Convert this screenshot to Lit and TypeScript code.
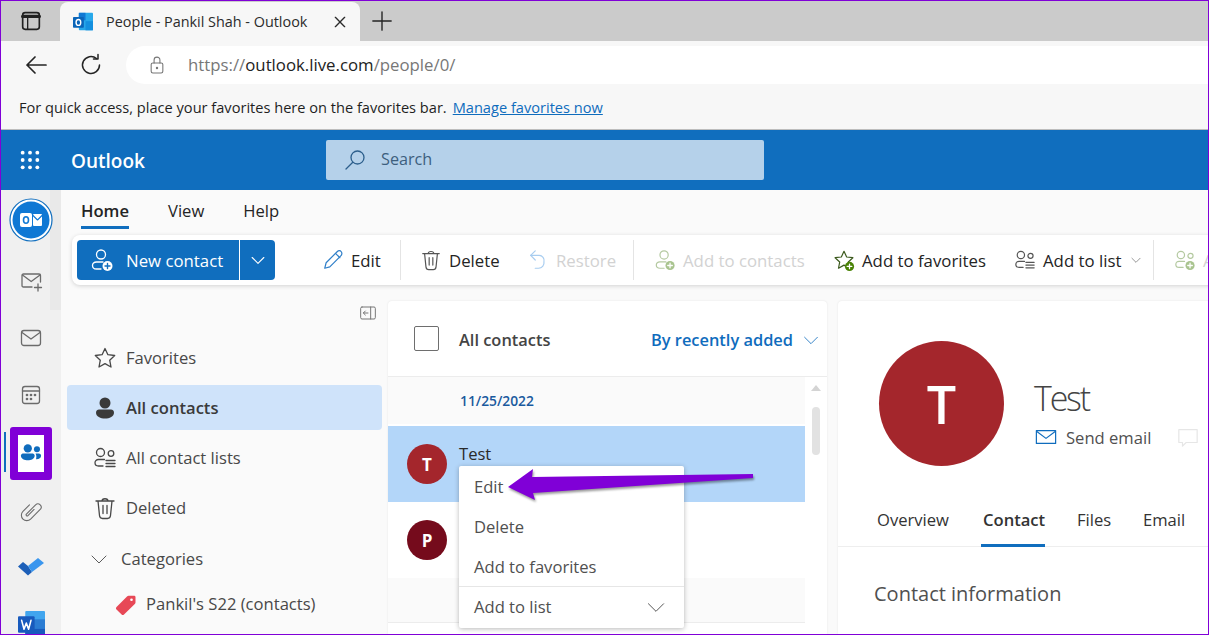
import { LitElement, html, css, svg } from 'lit';
import { customElement } from 'lit/decorators.js';

const icon = (size: number, body: unknown, box = 24) => html`
  <svg class="ic" width=${size} height=${size} viewBox="0 0 ${box} ${box}" fill="none" stroke="currentColor" stroke-width="1.3" stroke-linecap="round" stroke-linejoin="round">${body}</svg>`;

const plusBadge = (cx: number, cy: number, r: number, fill: string) => svg`
  <circle cx=${cx} cy=${cy} r=${r} fill=${fill} stroke="none"/>
  <path d="M${cx - r * 0.5} ${cy}H${cx + r * 0.5}M${cx} ${cy - r * 0.5}V${cy + r * 0.5}" stroke="#fff" stroke-width="1.4"/>`;

const chevron = svg`<path d="M5 9l7 7 7-7"/>`;
const thinChevron = svg`<path d="M5 9l7 7 7-7" stroke-width=".9"/>`;
const personAdd = (badge: string) => svg`
  <circle cx="11" cy="6.5" r="4.5"/>
  <path d="M13 14H6.5C4 14 2.5 15.5 2.5 17.5S4 21 6.5 21H11"/>
  ${plusBadge(17.5, 18, 5, badge)}`;
const peopleList = svg`
  <circle cx="7.5" cy="6.5" r="4"/><circle cx="18" cy="7.5" r="2.8"/>
  <path d="M11.5 13.5H5.5C3.5 13.5 2 15 2 16.8S3.5 20 5.5 20H10"/>
  <path d="M13 14.5H22M13 17.5H22M13 20.5H22"/>`;
const trash = svg`
  <path d="M3 5H21M9 5C9 2 15 2 15 5M5 5L6.5 19.5C6.7 21.5 8 22.500 9.500 22.500H14.500C16 22.500 17.300 21.500 17.500 19.500L19 5"/>
  <path d="M10 9.500V17.500M14 9.500V17.500"/>`;
const star = svg`<path d="M12 2.500l2.900 6.200 6.800.8-5 4.700 1.300 6.800-6-3.400-6 3.400 1.300-6.800-5-4.700 6.800-.8z"/>`;

const outlookTile = svg`
  <rect x="7" y="1" width="17" height="21" rx="1" fill="#28a8ea" stroke="none"/>
  <rect x="7" y="1" width="8" height="9" fill="#0f78d4" stroke="none"/>
  <rect x="15" y="11" width="9" height="11" fill="#1490df" stroke="none"/>
  <rect x="0" y="6" width="13" height="13" rx="1" fill="#0a64b8" stroke="none"/>
  <ellipse cx="6.500" cy="12.500" rx="2.800" ry="3.500" fill="none" stroke="#fff" stroke-width="1.700"/>`;

type RibbonItem = { label: string; ic: unknown; off?: boolean; caret?: boolean; tone?: string };

const ribbonItems: RibbonItem[] = [
  { label: 'Edit', tone: 'blue', ic: svg`<path d="M3 21l1.500-6L16.500 3C18 1.500 20 1.500 21 3s1 3-.5 4.500L8.500 19.500z"/><path d="M15 5l4.500 4.500"/>` },
  { label: 'sep', ic: null },
  { label: 'Delete', tone: 'grey', ic: trash },
  { label: 'Restore', off: true, tone: 'pale', ic: svg`<path d="M9 2L4 7l5 5"/><path d="M4 7h9a5.500 5.500 0 0 1 5.500 7 6 6 0 0 1-6 7H9"/>` },
  { label: 'sep', ic: null },
  { label: 'Add to contacts', off: true, tone: 'sage', ic: personAdd('#a9c48f') },
  { label: 'Add to favorites', tone: 'ink', ic: svg`${star}${plusBadge(18, 19, 5, '#498205')}` },
  { label: 'Add to list', caret: true, tone: 'grey', ic: peopleList },
  { label: 'sep', ic: null },
  { label: 'Add to contacts', off: true, tone: 'sage', ic: svg`
    <circle cx="7.500" cy="6.500" r="4"/><circle cx="18" cy="7.500" r="2.800"/>
    <path d="M11.500 13.500H5.500C3.500 13.500 2 15 2 16.800S3.500 20 5.500 20H10"/>${plusBadge(17.5, 18, 5, '#a9c48f')}` },
];

const navItems = [
  { label: 'Favorites', ic: star, cls: '' },
  {
    label: 'All contacts', cls: 'active',
    ic: svg`<circle cx="12" cy="7" r="5.500" fill="currentColor" stroke="none"/><path d="M3 16.500c0-2 1.500-3 3-3h12c1.500 0 3 1 3 3 0 4-4.500 6-9 6s-9-2-9-6z" fill="currentColor" stroke="none"/>`,
  },
  { label: 'All contact lists', ic: peopleList, cls: '' },
  { label: 'Deleted', ic: trash, cls: '' },
];

@customElement('app-root')
export class AppRoot extends LitElement {
  static styles = css`
    :host {
      display: block;
      width: 1209px;
      height: 635px;
      font-family: 'Open Sans', 'Noto Sans', sans-serif;
      font-size: 16.6px;
      color: #242424;
    }
    * { box-sizing: border-box; }
    .ic { display: block; flex: none; }

    .window {
      position: relative;
      width: 1209px;
      height: 635px;
      border: 1px solid #8000d7;
      display: flex;
      flex-direction: column;
      overflow: hidden;
      background: #fafafa;
    }

    /* browser chrome */
    .tabstrip {
      flex: none;
      height: 40px;
      background: #cbcbcb;
      display: flex;
      align-items: flex-end;
    }
    .tab-toggle { width: 59px; height: 40px; display: flex; align-items: center; justify-content: center; }
    .tab {
      width: 300px;
      height: 39px;
      background: #f7f7f7;
      border-radius: 8px 8px 0 0;
      display: flex;
      align-items: center;
      padding: 0 12px 0 13px;
      font-size: 14.4px;
      color: #2b2b2b;
      white-space: nowrap;
    }
    .tab .title { margin-left: 13px; flex: 1; }
    .new-tab { width: 44px; height: 40px; display: flex; align-items: center; justify-content: center; }

    .toolbar {
      flex: none;
      height: 47px;
      background: #f7f7f7;
      display: flex;
      align-items: center;
      padding-left: 23px;
    }
    .toolbar .refresh { margin-left: 31px; }
    .address {
      margin-left: 23px;
      flex: 1;
      height: 38px;
      margin-right: -30px;
      background: #fff;
      border-radius: 19px 0 0 19px;
      display: flex;
      align-items: center;
      padding-left: 21px;
      font-size: 16.8px;
      color: #777;
    }
    .address .url { margin-left: 21px; }
    .address b { font-weight: 400; color: #222; }

    .favbar {
      flex: none;
      height: 42px;
      background: #f7f7f7;
      border-bottom: 1px solid #bdbdbd;
      display: flex;
      align-items: center;
      padding: 0 0 3px 18px;
      font-size: 14.6px;
      color: #1f1f1f;
      white-space: nowrap;
    }
    .favbar a { margin-left: 6px; color: #0f6cbd; text-decoration: underline; }

    /* outlook header */
    .suite {
      flex: none;
      height: 60px;
      background: #106ebe;
      display: flex;
      align-items: center;
      color: #fff;
      padding-left: 18px;
    }
    .suite .brand { margin-left: 30px; width: 255px; font-size: 19px; font-weight: 600; padding-top: 2px; }
    .search {
      width: 438px;
      height: 40px;
      background: #b5d1ea;
      border-radius: 2px;
      display: flex;
      align-items: center;
      padding-left: 17px;
      color: #2d5f8c;
      font-size: 16.2px;
    }
    .search span { margin-left: 14px; color: #3d5f7e; padding-bottom: 2px; }

    .body { flex: 1; min-height: 0; display: flex; }

    /* app rail */
    .rail {
      flex: none;
      width: 60px;
      background: linear-gradient(#e9e9e9, #e9e9e9) right top / 11px 120px no-repeat, #f0f0f0;
      display: flex;
      flex-direction: column;
      align-items: center;
      padding-top: 8px;
      color: #6b6b6b;
      position: relative;
    }
    .logo { height: 44px; margin-bottom: 10px; }
    .slot { flex: none; height: 57.2px; width: 100%; display: flex; align-items: center; justify-content: center; }
    .slot.current { position: relative; }
    .slot.clip { padding-top: 3px; }
    .slot.word { padding-top: 2px; }
    .mark {
      width: 42px;
      height: 53px;
      margin-top: 2px;
      border: 8px solid #8000d7;
      border-radius: 3px;
      background: #fff;
      display: flex;
      align-items: center;
      justify-content: center;
      color: #0f6cbd;
    }
    .indicator { position: absolute; left: 3px; top: 8px; width: 2px; height: 40px; background: #106ebe; }

    .main { flex: 1; min-width: 0; display: flex; flex-direction: column; }

    /* ribbon */
    .ribbon-tabs {
      flex: none;
      height: 45px;
      display: flex;
      padding-left: 20px;
      gap: 39px;
      color: #242424;
    }
    .ribbon-tabs div { padding-top: 9px; height: 39px; }
    .ribbon-tabs .on { font-weight: 600; border-bottom: 3px solid #106ebe; }
    .ribbon {
      flex: none;
      height: 50px;
      margin-left: 11px;
      margin-right: -8px;
      padding-left: 5px;
      background: #fff;
      border-radius: 8px 0 0 8px;
      box-shadow: 0 1px 4px rgba(0, 0, 0, .16);
      display: grid;
      grid-template-columns: 245px 78px 20px 107px 106px 21px 179px 181px 139px 21px 60px;
      align-items: center;
      white-space: nowrap;
      font-size: 16.8px;
    }
    .split { display: flex; width: 198px; height: 40px; color: #fff; }
    .split .new {
      width: 162px;
      background: #106ebe;
      border-radius: 4px 0 0 4px;
      display: flex;
      align-items: center;
      padding-left: 13px;
      gap: 12px;
    }
    .split .more {
      width: 35px;
      margin-left: 1px;
      background: #106ebe;
      border-radius: 0 4px 4px 0;
      display: flex;
      align-items: center;
      justify-content: center;
    }
    .rb { display: flex; align-items: center; gap: 7px; color: #242424; overflow: hidden; }
    .rb.off { color: #d2d2d2; }
    .rb .i { color: #333; }
    .rb .i.blue { color: #2f7fc9; }
    .rb .i.grey { color: #555; }
    .rb .i.pale { color: #a8cdf0; }
    .rb .i.sage { color: #b4c9a0; }
    .rb .i.ink { color: #3c5a1e; }
    .rb .caret { margin-left: 1px; color: #777; }
    .rsep { width: 1px; height: 40px; background: #e4e4e4; }

    .content { flex: 1; min-height: 0; display: flex; padding-top: 16px; }

    /* nav */
    .nav { flex: none; width: 327px; padding: 0 6px; color: #484848; position: relative; }
    .collapse { display: flex; justify-content: flex-end; height: 34px; padding: 4px 6px 0 0; color: #777; }
    .nav-row {
      height: 45px;
      margin-bottom: 5px;
      border-radius: 4px;
      display: flex;
      align-items: center;
      padding-left: 26px;
      gap: 9px;
    }
    .nav-row.active { background: #cfe3fa; font-weight: 600; color: #3a3a3a; }
    .nav-row.cat { padding-left: 20px; gap: 10px; margin-bottom: 0; margin-top: 6px; }
    .nav-row.tag { padding-left: 47px; gap: 8px; margin-bottom: 0; }

    /* list */
    .list {
      flex: none;
      width: 439px;
      background: #fff;
      border-radius: 4px 4px 0 0;
      box-shadow: 0 0 2px rgba(0, 0, 0, .1);
      position: relative;
    }
    .list-head {
      height: 76px;
      border-bottom: 1px solid #ececec;
      display: flex;
      align-items: center;
      padding-left: 26px;
    }
    .check { width: 25px; height: 25px; border: 1px solid #6e6e6e; border-radius: 2px; }
    .list-head .all { margin-left: 20px; font-weight: 600; color: #444; font-size: 16.4px; padding-top: 2px; }
    .sort { margin-left: auto; display: flex; align-items: center; color: #0f6cbd; font-weight: 600; gap: 7px; padding: 2px 5px 0 0; font-size: 16.4px; }
    .list-body { display: flex; }
    .rows { width: 417px; }
    .date {
      height: 49px;
      padding: 14px 0 0 72px;
      background: #fafafa;
      border-bottom: 2px solid #fff;
      color: #1a5a9e;
      font-weight: 600;
      font-size: 13.8px;
    }
    .row { height: 76px; display: flex; padding: 18px 0 0 19px; gap: 12px; background: #fff; }
    .row.sel { background: #b3d6f9; }
    .av {
      width: 40px;
      height: 40px;
      border-radius: 50%;
      color: #fff;
      font-weight: 700;
      font-size: 17px;
      display: flex;
      align-items: center;
      justify-content: center;
    }
    .av.t { background: #a4262c; }
    .av.p { background: #750b1c; }
    .row .name { margin-top: -2px; color: #2a2a2a; }
    .group { height: 45px; background: #fafafa; border-bottom: 1px solid #ececec; }
    .scroll { width: 22px; display: flex; flex-direction: column; align-items: center; padding-top: 8px; }
    .scroll .up { width: 0; height: 0; border: 5px solid transparent; border-top: 0; border-bottom: 6px solid #d4d4d4; }
    .scroll .thumb { margin-top: 16px; width: 8px; height: 48px; border-radius: 4px; background: #e2e2e2; }

    .menu {
      position: absolute;
      left: 71px;
      top: 165px;
      width: 225px;
      height: 162px;
      background: #fff;
      border-radius: 2px;
      box-shadow: 0 1px 5px rgba(0, 0, 0, .28);
      color: #505050;
    }
    .menu div { height: 40px; display: flex; align-items: center; padding: 0 15px 0 15px; justify-content: space-between; }
    .menu .last { border-top: 1px solid #e6e6e6; height: 41px; padding-bottom: 1px; }

    /* detail */
    .detail {
      flex: none;
      width: 380px;
      margin-left: 11px;
      background: #fff;
      border-radius: 4px 0 0 0;
      box-shadow: 0 0 2px rgba(0, 0, 0, .1);
    }
    .hero { display: flex; padding: 40px 0 0 41px; height: 197px; }
    .big {
      flex: none;
      width: 125px;
      height: 125px;
      border-radius: 50%;
      background: #a4262c;
      color: #fff;
      font-size: 52px;
      font-weight: 600;
      display: flex;
      align-items: center;
      justify-content: center;
    }
    .who { margin-left: 30px; padding-top: 32px; }
    .who .name { font-size: 34px; font-weight: 300; letter-spacing: -2.2px; line-height: 50px; color: #444; }
    .acts { display: flex; align-items: center; color: #505050; height: 28px; white-space: nowrap; }
    .acts .mail { margin-left: 1px; color: #0f6cbd; }
    .acts span { margin-left: 9px; }
    .acts .chat { margin-left: 26px; color: #e6e6e6; }
    .dtabs {
      height: 49px;
      border-bottom: 1px solid #eee;
      display: grid;
      grid-template-columns: 104px 96px 66px auto;
      padding-left: 39px;
      color: #333;
    }
    .dtabs div { padding-top: 10px; }
    .dtabs .on { font-weight: 600; border-bottom: 3px solid #106ebe; padding-left: 2px; width: 64px; height: 49px; }
    .info { padding: 33px 0 0 36px; font-size: 20px; color: #505050; }

    .arrow { position: absolute; left: 499px; top: 459px; filter: drop-shadow(1px 2px 1px rgba(0, 0, 0, .4)); }
  `;

  private ribbonCell(it: RibbonItem) {
    if (it.label === 'sep') return html`<div class="rsep"></div>`;
    return html`
      <div class="rb ${it.off ? 'off' : ''}">
        <span class="i ${it.tone ?? ''}">${icon(22, it.ic)}</span>
        <span>${it.label}</span>
        ${it.caret ? html`<span class="caret">${icon(14, chevron)}</span>` : ''}
      </div>`;
  }

  render() {
    return html`
      <div class="window">
        <div class="tabstrip">
          <div class="tab-toggle">
            ${icon(20, svg`<rect x="2" y="2" width="20" height="20" rx="3" stroke-width="2" stroke="#222"/><path d="M2 6.500H22" stroke="#222" stroke-width="4"/><path d="M8 8V22" stroke="#222" stroke-width="1.600"/>`)}
          </div>
          <div class="tab">
            ${icon(20, outlookTile)}
            <span class="title">People - Pankil Shah - Outlook</span>
            ${icon(16, svg`<path d="M5 5L19 19M19 5L5 19" stroke-width="2"/>`)}
          </div>
          <div class="new-tab">${icon(22, svg`<path d="M12 2V22M2 12H22" stroke-width="1.500"/>`)}</div>
        </div>

        <div class="toolbar">
          ${icon(24, svg`<path d="M22 12H3M11 4L3 12L11 20" stroke-width="1.700"/>`)}
          <span class="refresh">${icon(24, svg`<path d="M20.500 12A8.500 8.500 0 1 1 17.500 5.500" stroke-width="1.500"/><path d="M19 1.500V6H14.500" stroke-width="1.500"/>`)}</span>
          <div class="address">
            ${icon(20, svg`<rect x="5" y="9.500" width="14" height="12" rx="2"/><path d="M8.500 9.500V6A3.500 3.500 0 0 1 15.500 6V9.500"/><circle cx="12" cy="15.500" r=".8" fill="currentColor"/>`)}
            <span class="url">https://<b>outlook.live.com</b>/people/0/</span>
          </div>
        </div>

        <div class="favbar">
          For quick access, place your favorites here on the favorites bar.
          <a>Manage favorites now</a>
        </div>

        <div class="suite">
          ${icon(22, svg`${[4, 12, 20].map((y) => [4, 12, 20].map((x) => svg`<circle cx=${x} cy=${y} r="2.100" fill="#fff" stroke="none"/>`))}`)}
          <div class="brand">Outlook</div>
          <div class="search">
            ${icon(24, svg`<circle cx="14.500" cy="9.500" r="6.500"/><path d="M9.800 14.200L3 21"/>`)}
            <span>Search</span>
          </div>
        </div>

        <div class="body">
          <div class="rail">
            <div class="logo">
              ${icon(44, svg`
                <circle cx="22" cy="22" r="21" stroke="#106ebe" stroke-width="1.200" fill="#fff"/>
                <circle cx="22" cy="22" r="18.500" fill="#0f78d4" stroke="none"/>
                <rect x="11" y="15" width="12" height="14" rx="2" fill="#fff" stroke="none"/>
                <ellipse cx="17" cy="22" rx="2.500" ry="3.300" stroke="#0f78d4" stroke-width="1.600"/>
                <rect x="24" y="16" width="9" height="12" rx="1" fill="#fff" stroke="none"/>
                <path d="M24 17.500L28.500 22L33 17.500" stroke="#0f78d4" stroke-width="1.100"/>`, 44)}
            </div>
            <div class="slot">${icon(24, svg`<path d="M13 18H4.500C3.500 18 3 17.500 3 16.500V6.500C3 5.500 3.500 5 4.500 5H20C21 5 21.500 5.500 21.500 6.500V13"/><path d="M3.500 6L12.200 12.500L21 6"/><path d="M19 15V22M15.500 18.500H22.500"/>`)}</div>
            <div class="slot">${icon(24, svg`<rect x="2.500" y="4.500" width="19" height="15" rx="2.500"/><path d="M3 6.500L12 13L21 6.500"/>`)}</div>
            <div class="slot">${icon(24, svg`<rect x="3.500" y="3.500" width="17" height="17" rx="2.500"/><path d="M3.500 8H20.500"/><circle cx="8" cy="12" r=".7" fill="currentColor"/><circle cx="12" cy="12" r=".7" fill="currentColor"/><circle cx="16" cy="12" r=".7" fill="currentColor"/><circle cx="8" cy="16" r=".7" fill="currentColor"/><circle cx="12" cy="16" r=".7" fill="currentColor"/>`)}</div>
            <div class="slot current">
              <div class="indicator"></div>
              <div class="mark">
                ${icon(22, svg`<circle cx="8.500" cy="7" r="4.500" fill="currentColor" stroke="none"/><circle cx="18.500" cy="8" r="3.300" fill="currentColor" stroke="none"/><path d="M1 15C1 13 2.500 12.500 4 12.500H13C14.500 12.500 16 13 16 15C16 18.500 12 20 8.500 20S1 18.500 1 15Z" fill="currentColor" stroke="none"/><path d="M17 12.500H20.500C22 12.500 23 13.500 23 15C23 17.500 20.500 19 17.500 18.800C18 16.500 18 14.500 17 12.500Z" fill="currentColor" stroke="none"/>`)}
              </div>
            </div>
            <div class="slot clip">${icon(26, svg`<path transform="rotate(45 12 12)" d="M7 9V17.500a5 5 0 0 0 10 0V5a3 3 0 0 0-6 0V17a1 1 0 0 0 2 0V9" stroke-width="1"/>`)}</div>
            <div class="slot">${icon(28, svg`<path d="M1 13.500L6 9L11 13L15 19L11 22.500Z" fill="#1d5fb8" stroke="none"/><path d="M11 13L21 5L27 10L15 19Z" fill="#3a96ee" stroke="none"/>`, 28)}</div>
            <div class="slot word">${icon(27, svg`<rect x="7" y="0" width="19" height="26" rx="1" fill="#41a5ee" stroke="none"/><rect x="7" y="8" width="19" height="9" fill="#2b7cd3" stroke="none"/><rect x="7" y="17" width="19" height="9" fill="#185abd" stroke="none"/><rect x="0" y="5" width="16" height="16" rx="1" fill="#185abd" stroke="none"/><path d="M3.500 9L5.800 17.500L8 11.500L10.200 17.500L12.500 9" stroke="#fff" stroke-width="1.500"/>`, 26)}</div>
          </div>

          <div class="main">
            <div class="ribbon-tabs">
              <div class="on">Home</div>
              <div>View</div>
              <div>Help</div>
            </div>

            <div class="ribbon">
              <div class="split">
                <div class="new">
                  ${icon(24, svg`<circle cx="11" cy="6.500" r="4.500"/><path d="M13 14H6.500C4 14 2.500 15.500 2.500 17.500S4 21 6.500 21H11"/><circle cx="17.500" cy="18" r="5" fill="#fff" stroke="none"/><path d="M15 18H20M17.500 15.500V20.500" stroke="#106ebe" stroke-width="1.400"/>`)}
                  <span>New contact</span>
                </div>
                <div class="more">${icon(20, chevron)}</div>
              </div>
              ${ribbonItems.map((it) => this.ribbonCell(it))}
            </div>

            <div class="content">
              <div class="nav">
                <div class="collapse">
                  ${icon(16, svg`<rect x="1" y="3" width="22" height="18" rx="2" stroke-width="1.500"/><path d="M16 3V21M12 12H5M8 9L5 12L8 15" stroke-width="1.500"/>`)}
                </div>
                ${navItems.map((n) => html`
                  <div class="nav-row ${n.cls}">${icon(24, n.ic)}<span>${n.label}</span></div>`)}
                <div class="nav-row cat">${icon(24, thinChevron)}<span>Categories</span></div>
                <div class="nav-row tag">
                  ${icon(24, svg`<path d="M2.500 15L13 4.500C13.500 4 14 3.800 14.500 3.800H20C21 3.800 21.500 4.300 21.500 5.300V10.500C21.500 11 21.300 11.500 20.800 12L10 22.500C9.300 23.200 8.300 23.200 7.600 22.500L2.500 17.500C1.800 16.800 1.800 15.800 2.500 15Z" fill="#e74856" stroke="none"/><circle cx="17.500" cy="7.700" r="1.300" fill="#fff" stroke="none"/>`)}
                  <span>Pankil's S22 (contacts)</span>
                </div>
              </div>

              <div class="list">
                <div class="list-head">
                  <div class="check"></div>
                  <div class="all">All contacts</div>
                  <div class="sort">By recently added ${icon(22, thinChevron)}</div>
                </div>
                <div class="list-body">
                  <div class="rows">
                    <div class="date">11/25/2022</div>
                    <div class="row sel"><div class="av t">T</div><div class="name">Test</div></div>
                    <div class="row"><div class="av p">P</div></div>
                    <div class="group"></div>
                  </div>
                  <div class="scroll"><div class="up"></div><div class="thumb"></div></div>
                </div>
                <div class="menu">
                  <div>Edit</div>
                  <div>Delete</div>
                  <div>Add to favorites</div>
                  <div class="last">Add to list ${icon(26, thinChevron)}</div>
                </div>
              </div>

              <div class="detail">
                <div class="hero">
                  <div class="big">T</div>
                  <div class="who">
                    <div class="name">Test</div>
                    <div class="acts">
                      <span class="mail">${icon(22, svg`<rect x="1.500" y="5" width="21" height="14"/><path d="M2 6L12 13.500L22 6"/>`)}</span>
                      <span>Send email</span>
                      <span class="chat">${icon(22, svg`<path d="M2 4H22V18H10L6 22V18H2Z"/>`)}</span>
                    </div>
                  </div>
                </div>
                <div class="dtabs">
                  <div>Overview</div>
                  <div class="on">Contact</div>
                  <div>Files</div>
                  <div>Email</div>
                </div>
                <div class="info">Contact information</div>
              </div>
            </div>
          </div>
        </div>

        <svg class="arrow" width="260" height="50" viewBox="500 460 260 50">
          <polygon fill="#8000d7" points="508,487 533,469 532,477 753,474 753,478 533,493 535,500"/>
        </svg>
      </div>
    `;
  }
}
